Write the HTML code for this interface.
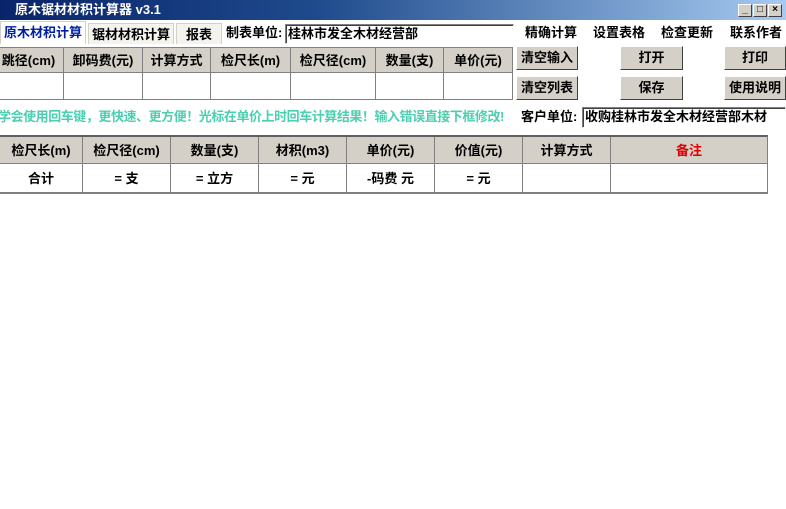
<!DOCTYPE html>
<html><head><meta charset="utf-8"><style>
*{margin:0;padding:0;box-sizing:border-box}
body{width:786px;height:509px;background:#fff;position:relative;overflow:hidden;font-family:"Liberation Sans","Noto Sans CJK SC","WenQuanYi Zen Hei",sans-serif;font-size:13px;font-weight:bold;color:#000}
.a{position:absolute}
.title{left:0;top:0;width:786px;height:20px;background:linear-gradient(90deg,#0a246a,#1e4a8c 40%,#a6caf0);color:#fff;font-size:13px;line-height:20px;padding-left:15px}
.wb{top:4px;width:14px;height:13px;background:#d4d0c8;border:1px solid;border-color:#fff #404040 #404040 #fff;font-size:10px;line-height:10px;text-align:center;color:#000}
.tab{top:23px;height:21px;line-height:21px;text-align:center;background:#f4f3ee;border:1px solid #d4d0c8;border-bottom:none}
.cell{position:absolute;border-right:1px solid #808080;text-align:center;white-space:nowrap;overflow:hidden}
.btn{position:absolute;background:#d4d0c8;border:1px solid;border-color:#fff #404040 #404040 #fff;text-align:center;line-height:21px;height:24px}
.inp{background:#fff;border:1px solid;border-color:#808080 #fff #fff #808080;box-shadow:inset 1px 1px 0 #404040;line-height:18px;padding-left:2px}
</style></head><body>
<div class="a title">原木锯材材积计算器 v3.1</div>
<div class="a wb" style="left:738px">_</div>
<div class="a wb" style="left:753px">□</div>
<div class="a wb" style="left:768px">×</div>

<div class="a tab" style="left:0;width:86px;color:#0020a0;background:#fff;top:21px;height:23px">原木材积计算</div>
<div class="a tab" style="left:88px;width:86px">锯材材积计算</div>
<div class="a tab" style="left:176px;width:46px">报表</div>
<div class="a" style="left:226px;top:24px;line-height:18px">制表单位:</div>
<div class="a inp" style="left:285px;top:24px;width:229px;height:20px">桂林市发全木材经营部</div>
<div class="a" style="left:525px;top:24px;line-height:18px">精确计算</div>
<div class="a" style="left:593px;top:24px;line-height:18px">设置表格</div>
<div class="a" style="left:661px;top:24px;line-height:18px">检查更新</div>
<div class="a" style="left:730px;top:24px;line-height:18px">联系作者</div>

<div class="a" style="left:0;top:47px;width:513px;height:53px;border-bottom:1px solid #808080;border-top:1px solid #808080">
<div style="position:absolute;left:0;top:0;width:513px;height:25px;background:#d4d0c8;border-bottom:1px solid #808080"></div>
</div>
<div class="cell" style="left:-6px;top:48px;width:70px;height:51px;line-height:25px">跳径(cm)</div>
<div class="cell" style="left:64px;top:48px;width:79px;height:51px;line-height:25px">卸码费(元)</div>
<div class="cell" style="left:143px;top:48px;width:68px;height:51px;line-height:25px">计算方式</div>
<div class="cell" style="left:211px;top:48px;width:80px;height:51px;line-height:25px">检尺长(m)</div>
<div class="cell" style="left:291px;top:48px;width:85px;height:51px;line-height:25px">检尺径(cm)</div>
<div class="cell" style="left:376px;top:48px;width:68px;height:51px;line-height:25px">数量(支)</div>
<div class="cell" style="left:444px;top:48px;width:69px;height:51px;line-height:25px">单价(元)</div>

<div class="btn" style="left:516px;top:46px;width:62px">清空输入</div>
<div class="btn" style="left:516px;top:76px;width:62px">清空列表</div>
<div class="btn" style="left:620px;top:46px;width:63px">打开</div>
<div class="btn" style="left:620px;top:76px;width:63px">保存</div>
<div class="btn" style="left:724px;top:46px;width:62px">打印</div>
<div class="btn" style="left:724px;top:76px;width:62px">使用说明</div>

<div class="a" style="left:-2px;top:108px;color:#4ccfb0;line-height:18px;white-space:nowrap;letter-spacing:-0.45px">学会使用回车键，更快速、更方便！光标在单价上时回车计算结果！输入错误直接下框修改!</div>
<div class="a" style="left:521px;top:108px;line-height:18px;background:#fff">客户单位:</div>
<div class="a inp" style="left:582px;top:107px;width:204px;height:21px">收购桂林市发全木材经营部木材</div>

<div class="a" style="left:0;top:135px;width:768px;height:59px;border-top:2px solid #606060;border-bottom:2px solid #808080;border-right:1px solid #808080">
<div style="position:absolute;left:0;top:0;width:767px;height:27px;background:#d4d0c8;border-bottom:1px solid #808080"></div>
</div>
<div class="cell" style="left:0;top:137px;width:83px;height:55px;line-height:27px">检尺长(m)<br><span style="line-height:30px">合计</span></div>
<div class="cell" style="left:83px;top:137px;width:88px;height:55px;line-height:27px">检尺径(cm)<br><span style="line-height:30px">= 支</span></div>
<div class="cell" style="left:171px;top:137px;width:88px;height:55px;line-height:27px">数量(支)<br><span style="line-height:30px">= 立方</span></div>
<div class="cell" style="left:259px;top:137px;width:88px;height:55px;line-height:27px">材积(m3)<br><span style="line-height:30px">= 元</span></div>
<div class="cell" style="left:347px;top:137px;width:88px;height:55px;line-height:27px">单价(元)<br><span style="line-height:30px">-码费 元</span></div>
<div class="cell" style="left:435px;top:137px;width:88px;height:55px;line-height:27px">价值(元)<br><span style="line-height:30px">= 元</span></div>
<div class="cell" style="left:523px;top:137px;width:88px;height:55px;line-height:27px">计算方式</div>
<div class="cell" style="left:611px;top:137px;width:156px;height:55px;line-height:27px;color:#e00000;border-right:none">备注</div>
</body></html>
